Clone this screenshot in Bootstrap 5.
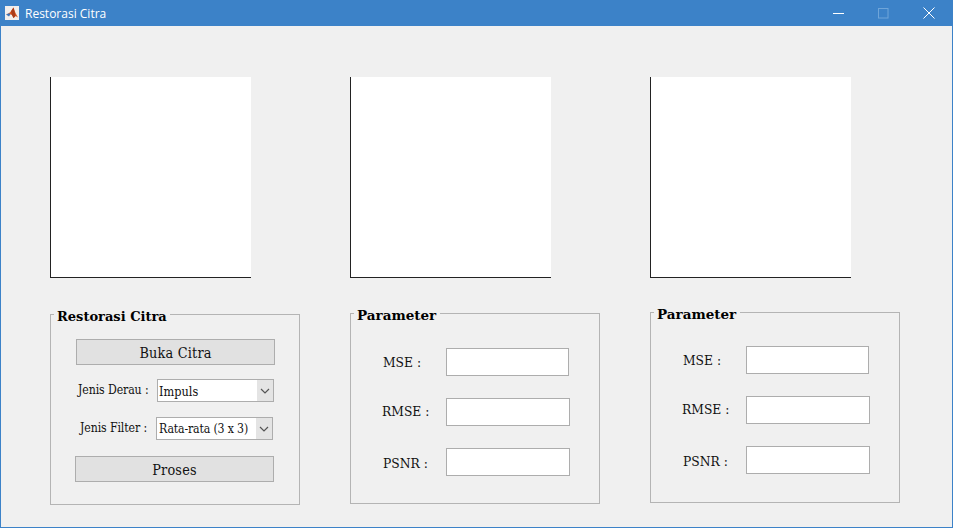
<!DOCTYPE html>
<html lang="id">
<head>
<meta charset="utf-8">
<title>Restorasi Citra</title>
<link href="https://cdn.jsdelivr.net/npm/bootstrap@5.3.0/dist/css/bootstrap.min.css" rel="stylesheet">
<style>
html,body{margin:0;height:100%;overflow:hidden}
body{background:#f0f0f0;font-family:"DejaVu Serif Condensed","DejaVu Serif","Liberation Serif",serif;font-stretch:condensed;color:#111}
.win{height:528px;width:953px;border:1px solid #3c82c8;border-top:0;display:flex;flex-direction:column}
.tbar{height:26px;flex:none;background:#3c82c8;margin:0 -1px;color:#fff;font:12px "Open Sans","Liberation Sans",sans-serif;font-stretch:normal;padding-left:5px;gap:6px}
.tbtns{margin-left:auto;margin-right:2px}
.tbtn{width:45px;height:26px;display:flex;align-items:center;justify-content:center}
.stage{gap:50px;padding:51px 0 0 49px}
.colm{width:250px;flex:none}
.axes{width:201px;height:201px;background:#fff;border-left:1px solid #222;border-bottom:1px solid #222}
.frame{width:250px;height:191px;border:1px solid #b4b4b4;position:relative}
.ftitle{position:absolute;left:3px;top:-8px;height:18px;padding:0 4px 0 3px;background:#f0f0f0;font:bold 13.5px/18px "DejaVu Serif",serif;font-stretch:normal;color:#000;margin:0;white-space:nowrap}
.ftitle.tight{font-size:13px;padding-right:3px;top:-7px}
.f1{margin-top:36px}.f2{margin-top:35px}.f3{margin-top:34px}
.ctrl{padding:24px 0 0 25px}
.gbtn{width:199px;height:26px;padding:1px 0 0;border:1px solid #adadad;border-radius:0;background:#e1e1e1;color:#111;font-size:14.3px;line-height:24px;font-family:inherit;font-stretch:condensed;letter-spacing:.2px}
.gbtn:hover{background:#e1e1e1;border-color:#adadad;color:#111}
.srow{height:23px;display:flex;align-items:center}
.srow label{font-size:12.2px;letter-spacing:-.1px;white-space:nowrap}
.lab1{width:81px;flex:none;padding-left:2px}
.lab2{width:80px;flex:none;padding-left:4px}
.sel{width:117px;height:23px;flex:none;padding:1px 0 0 1px;border:1px solid #adadad;border-radius:0;font-size:12.6px;line-height:21px;color:#111;font-family:inherit;font-stretch:condensed;background-color:#fff;background-image:url("data:image/svg+xml,%3Csvg xmlns='http://www.w3.org/2000/svg' width='16' height='21'%3E%3Crect width='16' height='21' fill='%23e4e4e4'/%3E%3Cpath d='M4 9l4 4 4-4' fill='none' stroke='%23555' stroke-width='1.2'/%3E%3C/svg%3E");background-repeat:no-repeat;background-position:right center;background-size:16px 21px}
.sel.narrow{font-size:12.2px;letter-spacing:-.15px;padding-left:2px}
.sp14{margin-top:14px}.sp15{margin-top:15px}.sp16{margin-top:16px}
.shl{margin-left:-1px}
.prow{display:flex;align-items:center;height:28px}
.prow label{width:64px;flex:none;font-size:13.7px;white-space:nowrap}
.ind{padding-left:1px}
.prow label.lift{padding-bottom:2px}
.prow label.drop{padding-top:2px}
.pin{width:124px;height:28px;flex:none;padding:0;border:1px solid #adadad;border-radius:0;background:#fff}
.pin.nar{width:123px}
.plist{padding:34px 0 0 31px;display:flex;flex-direction:column;gap:22px}
.plist.up{padding-top:33px}
</style>
</head>
<body>
<div class="win">
  <div class="tbar d-flex align-items-center">
    <svg width="14" height="14" viewBox="0 0 14 14"><rect width="14" height="14" fill="#f1eeec"/><path d="M1 8.5l3-1.2 2-2L8.5 1.5 10.5 7 13 11.5 10.5 10l-2 2-1.5-3-2.5-1z" fill="#d9541e"/><path d="M1 8.5l3-1.2 1.5 1L4 10.5z" fill="#3f74b5"/><path d="M8.5 1.5L6 5.3 7 9l1.5 3 2-2z" fill="#a83c1a"/></svg>
    <span>Restorasi Citra</span>
    <div class="tbtns d-flex">
      <div class="tbtn"><svg width="11" height="11"><path d="M0 5.5h11" stroke="#fff"/></svg></div>
      <div class="tbtn"><svg width="11" height="11"><rect x=".5" y=".5" width="9.5" height="9.5" fill="none" stroke="#6fa5d9"/></svg></div>
      <div class="tbtn"><svg width="12" height="12"><path d="M.5.5l11 11M11.5.5l-11 11" stroke="#fff"/></svg></div>
    </div>
  </div>
  <div class="stage d-flex">
    <div class="colm">
      <div class="axes"></div>
      <div class="frame f1">
        <h6 class="ftitle tight">Restorasi Citra</h6>
        <div class="ctrl">
          <button type="button" class="btn gbtn d-block">Buka Citra</button>
          <div class="srow sp14"><label class="lab1">Jenis Derau :</label><select class="form-select sel" aria-label="Jenis Derau"><option>Impuls</option></select></div>
          <div class="srow sp15"><label class="lab2">Jenis Filter :</label><select class="form-select sel narrow" aria-label="Jenis Filter"><option>Rata-rata (3 x 3)</option></select></div>
          <button type="button" class="btn gbtn d-block sp16 shl">Proses</button>
        </div>
      </div>
    </div>
    <div class="colm">
      <div class="axes"></div>
      <div class="frame f2">
        <h6 class="ftitle">Parameter</h6>
        <div class="plist">
          <div class="prow"><label class="ind">MSE :</label><input class="form-control pin nar" type="text" aria-label="MSE"></div>
          <div class="prow"><label class="lift">RMSE :</label><input class="form-control pin" type="text" aria-label="RMSE"></div>
          <div class="prow"><label class="ind drop">PSNR :</label><input class="form-control pin" type="text" aria-label="PSNR"></div>
        </div>
      </div>
    </div>
    <div class="colm">
      <div class="axes"></div>
      <div class="frame f3">
        <h6 class="ftitle">Parameter</h6>
        <div class="plist up">
          <div class="prow"><label class="ind">MSE :</label><input class="form-control pin nar" type="text" aria-label="MSE"></div>
          <div class="prow"><label class="lift">RMSE :</label><input class="form-control pin" type="text" aria-label="RMSE"></div>
          <div class="prow"><label class="ind drop">PSNR :</label><input class="form-control pin" type="text" aria-label="PSNR"></div>
        </div>
      </div>
    </div>
  </div>
</div>
<script src="https://cdn.jsdelivr.net/npm/bootstrap@5.3.0/dist/js/bootstrap.bundle.min.js"></script>
</body>
</html>
